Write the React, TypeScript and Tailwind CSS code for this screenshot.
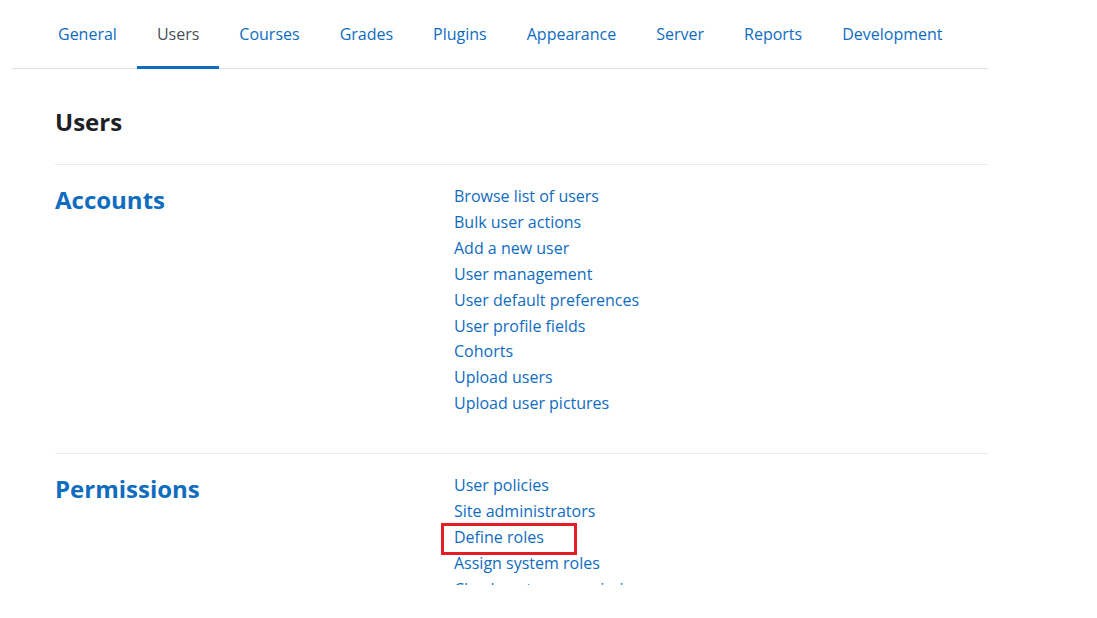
const tabs = ["General", "Users", "Courses", "Grades", "Plugins", "Appearance", "Server", "Reports", "Development"];

const accounts = [
  "Browse list of users",
  "Bulk user actions",
  "Add a new user",
  "User management",
  "User default preferences",
  "User profile fields",
  "Cohorts",
  "Upload users",
  "Upload user pictures",
];

const permissions = [
  "User policies",
  "Site administrators",
  "Define roles",
  "Assign system roles",
  "Check system permissions",
  "Capability overview",
];

const Section = ({ title, links, boxed }: { title: string; links: string[]; boxed?: string }) => {
  return (
    <div className="grid grid-cols-[399px_1fr] pt-[19px] pb-[36px] border-t border-[#e9ecef]">
      <h3 className="text-[24px] font-bold text-[#0f6cbf] leading-[30px] mt-[1px]">{title}</h3>
      <ul className="flex flex-col">
        {links.map((l) => (
          <li key={l} className="leading-[25.9px]">
            <a href="#" className="relative inline-block text-[16px] text-[#0f6cbf]">
              {l}
              {boxed === l && (
                <span className="absolute left-[-13px] right-[-33px] top-[-2px] bottom-[-4px] border-[3px] border-[#e41e26]" />
              )}
            </a>
          </li>
        ))}
      </ul>
    </div>
  );
};

const App = () => {
  return (
    <main className="h-[585px] overflow-hidden bg-white" style={{ fontFamily: '"Open Sans", sans-serif' }}>
      <div className="w-[976px] ml-3">
        <nav className="flex border-b border-[#dee2e6] pl-[26px]">
          {tabs.map((t) => (
            <a
              key={t}
              href="#"
              className={
                t === "Users"
                  ? "h-[69px] px-5 pt-[2px] flex items-center text-[16px] text-[#495057] border-b-[3px] border-[#0f6cbf] mb-[-1px]"
                  : "h-[69px] px-5 pt-[2px] flex items-center text-[16px] text-[#0f6cbf] border-b-[3px] border-transparent mb-[-1px]"
              }
            >
              {t}
            </a>
          ))}
        </nav>
        <div className="pl-[43px]">
          <h2 className="mt-[38px] mb-[27px] text-[24px] font-bold text-[#1d2125] leading-[30px]">Users</h2>
          <Section title="Accounts" links={accounts} />
          <Section title="Permissions" links={permissions} boxed="Define roles" />
        </div>
      </div>
    </main>
  );
};

export default App;
